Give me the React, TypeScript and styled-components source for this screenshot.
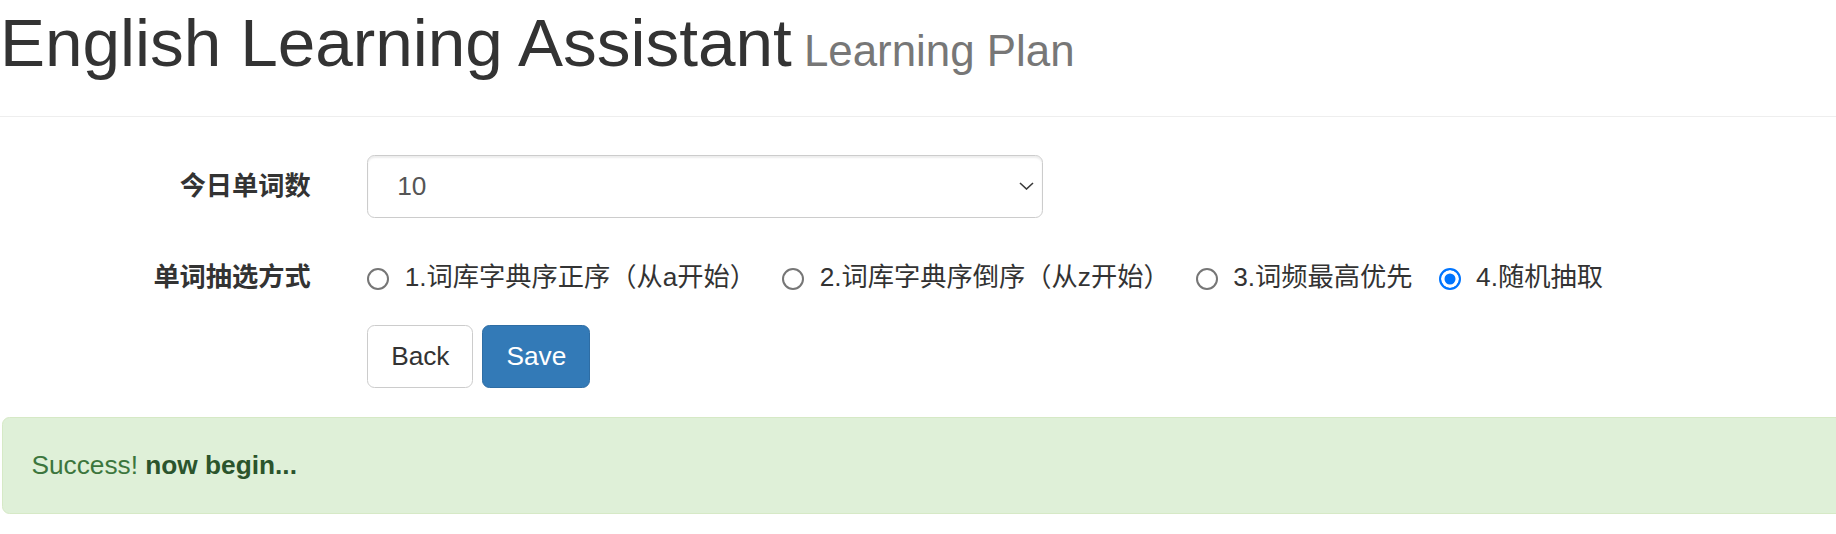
import React from "react";
import styled, { createGlobalStyle } from "styled-components";

const GlobalStyle = createGlobalStyle`
  html, body {
    margin: 0;
    padding: 0;
    background: #fff;
    overflow: hidden;
  }
  body {
    font-family: "Liberation Sans", Arial, "Noto Sans CJK SC", sans-serif;
    font-size: 26.25px;
    line-height: 37.5px;
    color: #333;
  }
  * { box-sizing: border-box; }
`;

const Page = styled.div`
  width: 100%;
  overflow: hidden;
`;

const PageHeader = styled.header`
  padding-bottom: 16.875px;
  margin: 0 0 37.5px;
  border-bottom: 1px solid #eee;
`;

const Title = styled.h1`
  margin: 6.2px 0 18.75px;
  font-size: 67.5px;
  line-height: 74.25px;
  font-weight: 400;
  color: #333;
`;

const Subtitle = styled.small`
  font-size: 65%;
  line-height: 1;
  font-weight: 400;
  color: #777;
`;

const Form = styled.form`
  margin: 0;
`;

const FormGroup = styled.div`
  display: grid;
  grid-template-columns: 339px 1fr;
  margin-bottom: 28.125px;
`;

const ControlLabel = styled.label`
  padding: 13.125px 28.125px 0 0;
  text-align: right;
  font-weight: 700;
  line-height: 37.5px;
  white-space: nowrap;
`;

const Field = styled.div<{ $inline?: boolean }>`
  padding-left: 28.125px;
  display: flex;
  align-items: center;
  gap: ${(p) => (p.$inline ? "26px" : "9px")};
  padding-top: ${(p) => (p.$inline ? "13.125px" : "0")};
  white-space: nowrap;
`;

const SelectWrap = styled.div`
  position: relative;
  width: 675.75px;
`;

const Select = styled.select`
  appearance: none;
  -webkit-appearance: none;
  display: block;
  width: 100%;
  height: 63.5px;
  padding: 0 40px 0 29px;
  font-family: inherit;
  font-size: 26.25px;
  color: #555;
  background: #fff;
  border: 1px solid #ccc;
  border-radius: 7.5px;
  box-shadow: inset 0 1.875px 1.875px rgba(0, 0, 0, 0.075);
  outline: none;
`;

const Chevron = styled.svg`
  position: absolute;
  right: 9px;
  top: 50%;
  margin-top: -4px;
  width: 15px;
  height: 8px;
  pointer-events: none;
`;

const RadioItem = styled.label`
  display: inline-flex;
  align-items: center;
  line-height: 37.5px;
  cursor: pointer;
`;

const Radio = styled.input.attrs({ type: "radio" })`
  appearance: none;
  -webkit-appearance: none;
  flex: none;
  width: 22px;
  height: 22px;
  margin: 1px 15.5px 0 0;
  border-radius: 50%;
  border: 2px solid #767676;
  background: #fff;
  &:checked {
    border: 2.5px solid #0075ff;
    background: #0075ff;
    box-shadow: inset 0 0 0 3.5px #fff;
  }
`;

const Button = styled.button<{ $primary?: boolean }>`
  display: inline-block;
  height: 63.5px;
  padding: 0 23px;
  font-family: inherit;
  font-size: 26.25px;
  line-height: 37.5px;
  border-radius: 7.5px;
  border: 1px solid ${(p) => (p.$primary ? "#2e6da4" : "#ccc")};
  background: ${(p) => (p.$primary ? "#337ab7" : "#fff")};
  color: ${(p) => (p.$primary ? "#fff" : "#333")};
  cursor: pointer;
`;

const Alert = styled.div`
  margin: 0 -80px 37.5px 2px;
  padding: 29px 29px 29px 28.5px;
  border: 1px solid #d6e9c6;
  border-radius: 7.5px;
  background: #dff0d8;
  color: #3c763d;
  line-height: 37.5px;
`;

const AlertLink = styled.strong`
  color: #2b542c;
  font-weight: 700;
`;

const methods = [
  "1.词库字典序正序（从a开始）",
  "2.词库字典序倒序（从z开始）",
  "3.词频最高优先",
  "4.随机抽取",
];

export default function App() {
  const [method, setMethod] = React.useState(3);
  const [count, setCount] = React.useState("10");
  return (
    <Page>
      <GlobalStyle />
      <PageHeader>
        <Title>
          English Learning Assistant<Subtitle> Learning Plan</Subtitle>
        </Title>
      </PageHeader>
      <Form onSubmit={(e) => e.preventDefault()}>
        <FormGroup>
          <ControlLabel>今日单词数</ControlLabel>
          <Field>
            <SelectWrap>
              <Select value={count} onChange={(e) => setCount(e.target.value)}>
                {["5", "10", "15", "20", "30", "50"].map((v) => (
                  <option key={v} value={v}>
                    {v}
                  </option>
                ))}
              </Select>
              <Chevron viewBox="0 0 15 8">
                <path d="M1 1 L7.5 7 L14 1" fill="none" stroke="#3a3a3a" strokeWidth="1.6" />
              </Chevron>
            </SelectWrap>
          </Field>
        </FormGroup>
        <FormGroup>
          <ControlLabel>单词抽选方式</ControlLabel>
          <Field $inline>
            {methods.map((m, i) => (
              <RadioItem key={m}>
                <Radio name="method" checked={method === i} onChange={() => setMethod(i)} />
                {m}
              </RadioItem>
            ))}
          </Field>
        </FormGroup>
        <FormGroup>
          <span />
          <Field>
            <Button type="button">Back</Button>
            <Button type="submit" $primary>
              Save
            </Button>
          </Field>
        </FormGroup>
      </Form>
      <Alert>
        Success! <AlertLink>now begin...</AlertLink>
      </Alert>
    </Page>
  );
}
